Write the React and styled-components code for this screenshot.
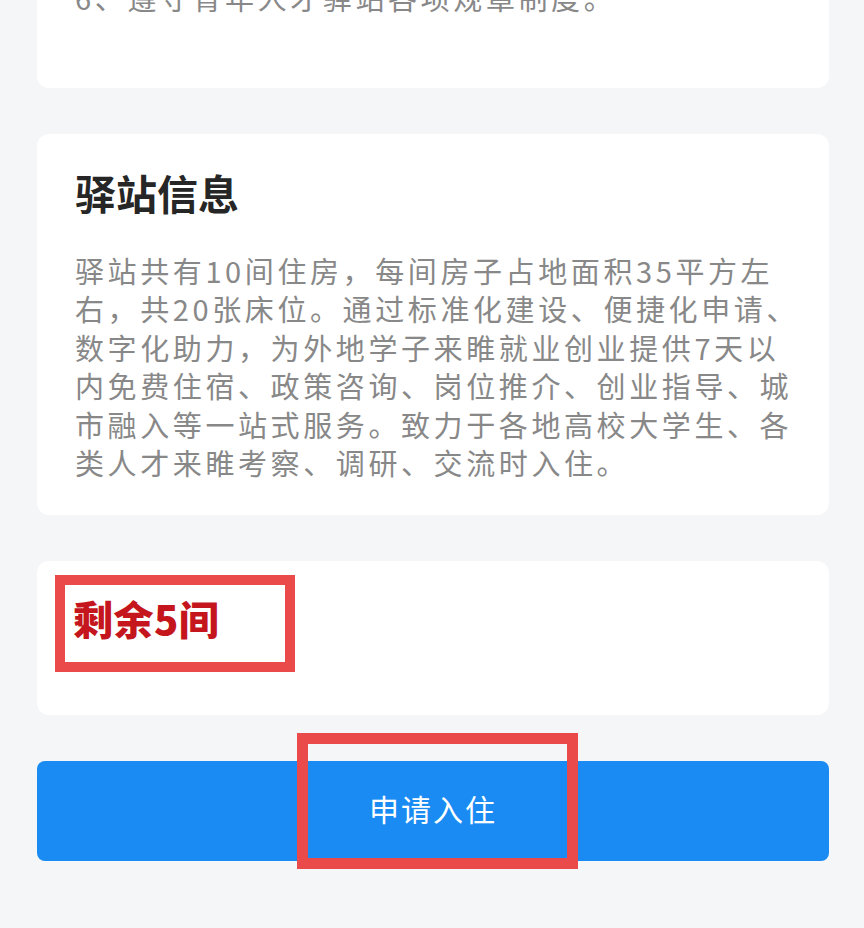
import styled, { createGlobalStyle } from 'styled-components';

const GlobalStyle = createGlobalStyle`
  html, body {
    margin: 0;
    padding: 0;
    background: #f5f6f8;
    font-family: "Noto Sans CJK SC", "Noto Sans", sans-serif;
  }
`

const Page = styled.div`
  width: 864px;
  height: 928px;
  overflow: hidden;
  box-sizing: border-box;
  padding: 0 35px 0 37px;
  display: flex;
  flex-direction: column;
  gap: 46px;
  background: #f5f6f8;
`

const Card = styled.section`
  background: #fff;
  border-radius: 12px;
  box-sizing: border-box;
  padding: ${p => p.$pad || '34px 26px 33px 38px'};
  margin-top: ${p => p.$top || '0'};
`

const Title = styled.h2`
  margin: 0 0 35px;
  font-size: 41px;
  line-height: 48px;
  font-weight: 700;
  color: #262626;
`

const Body = styled.p`
  margin: 0;
  font-size: 29px;
  letter-spacing: 3.6px;
  line-height: 38.5px;
  color: #888;
  word-break: break-all;
`

const Highlight = styled.div`
  display: inline-flex;
  align-items: center;
  box-sizing: border-box;
  width: 240px;
  height: 97px;
  border: 10px solid #ea4a4a;
  padding: 0 0 10px 8px;
`

const Remain = styled.span`
  font-size: 40px;
  font-weight: 900;
  color: #c4161c;
  letter-spacing: 0.5px;
`

const ButtonWrap = styled.div`
  position: relative;
`

const ApplyButton = styled.button`
  width: 100%;
  height: 100px;
  border: none;
  border-radius: 8px;
  background: #1a8bf2;
  color: #fff;
  font-family: inherit;
  font-size: 30px;
  letter-spacing: 2px;
  padding: 0 0 5px;
  cursor: pointer;
`

const Marker = styled.div`
  position: absolute;
  left: 260px;
  top: -28px;
  width: 281px;
  height: 136px;
  box-sizing: border-box;
  border: 11px solid #ea4a4a;
  pointer-events: none;
`

export default function App() {
  return (
    <>
      <GlobalStyle />
      <Page>
        <Card $pad="0 38px 71px" $top="-22px">
          <Body>6、遵守青年人才驿站各项规章制度。</Body>
        </Card>
        <Card>
          <Title>驿站信息</Title>
          <Body>
            驿站共有10间住房，每间房子占地面积35平方左右，共20张床位。通过标准化建设、便捷化申请、数字化助力，为外地学子来睢就业创业提供7天以内免费住宿、政策咨询、岗位推介、创业指导、城市融入等一站式服务。致力于各地高校大学生、各类人才来睢考察、调研、交流时入住。
          </Body>
        </Card>
        <Card $pad="14px 18px 43px">
          <Highlight>
            <Remain>剩余5间</Remain>
          </Highlight>
        </Card>
        <ButtonWrap>
          <ApplyButton>申请入住</ApplyButton>
          <Marker />
        </ButtonWrap>
      </Page>
    </>
  );
}
